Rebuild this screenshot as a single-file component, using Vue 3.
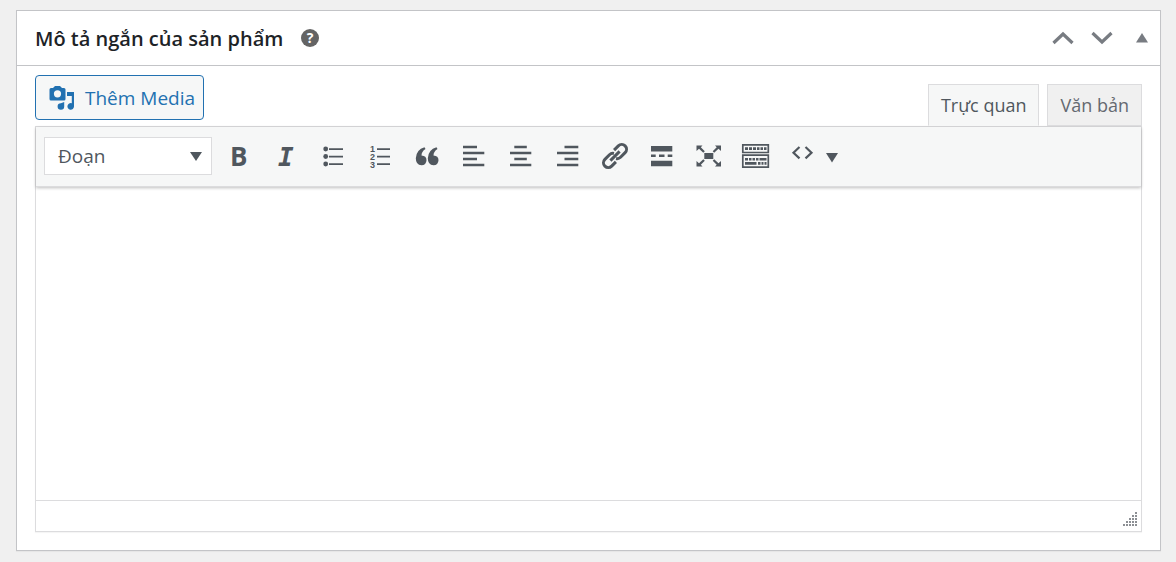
<script setup>
import { ref } from 'vue'

const format = ref('p')
const mode = ref('visual')
const content = ref('')
const open = ref(true)
</script>

<template>
  <section class="postbox">
    <header class="head">
      <h2>Mô tả ngắn của sản phẩm</h2>
      <button type="button" class="plain help" aria-label="Trợ giúp">
        <svg width="18" height="18" viewBox="0 0 18 18">
          <circle cx="9" cy="9" r="9" fill="#646464" />
          <text x="9" y="14" text-anchor="middle" class="mark">?</text>
        </svg>
      </button>
      <div class="handles">
        <button type="button" class="plain" aria-label="Di chuyển lên">
          <svg width="22" height="14" viewBox="0 0 22 14">
            <path d="M1.5 12 11 3l9.500 9" fill="none" stroke="#787c82" stroke-width="3.200" />
          </svg>
        </button>
        <button type="button" class="plain" aria-label="Di chuyển xuống">
          <svg width="22" height="14" viewBox="0 0 22 14">
            <path d="M1.500 2 11 11 20.500 2" fill="none" stroke="#787c82" stroke-width="3.200" />
          </svg>
        </button>
        <button type="button" class="plain toggle" aria-label="Thu gọn" @click="open = !open">
          <svg width="12" height="14" viewBox="0 0 12 14">
            <path d="M6 2 12 11.500H0z" fill="#787c82" />
          </svg>
        </button>
      </div>
    </header>

    <div v-show="open" class="inside">
      <div class="tools">
        <button type="button" class="media">
          <svg width="26" height="26" viewBox="0 0 26 26" fill="#2271b1">
            <path fill-rule="evenodd" d="M2 3h2l2-2h5l2 2h2q1.500 0 1.500 1.500V14q0 1.500-1.500 1.500H2Q.5 15.500.5 14V4.500Q.5 3 2 3zM8.500 5.200a3.600 3.600 0 1 0 0 7.200 3.600 3.600 0 0 0 0-7.200z" />
            <path d="M18 7h7v14.500a3.300 3.300 0 1 1-2.200-3.200V11H18z" />
            <path d="M15.200 17v4.500a3.300 3.300 0 1 1-3.300-3.300z" />
          </svg>
          Thêm Media
        </button>
        <div class="tabs">
          <button type="button" :class="{ active: mode === 'visual' }" @click="mode = 'visual'">Trực quan</button>
          <button type="button" :class="{ active: mode === 'text' }" @click="mode = 'text'">Văn bản</button>
        </div>
      </div>

      <div class="editor">
        <div class="toolbar" role="toolbar">
          <div class="format">
            <select v-model="format" aria-label="Định dạng">
              <option value="p">Đoạn</option>
            </select>
            <svg width="12" height="10" viewBox="0 0 12 10"><path d="M0 1h12L6 10z" /></svg>
          </div>

          <button type="button" class="tool" aria-label="Chữ đậm">
            <svg width="32" height="32"><text x="7" y="26" class="bold">B</text></svg>
          </button>
          <button type="button" class="tool" aria-label="Chữ nghiêng">
            <svg width="32" height="32"><text x="8" y="26" class="italic">I</text></svg>
          </button>
          <button type="button" class="tool" aria-label="Danh sách">
            <svg width="32" height="32">
              <circle cx="8.700" cy="9" r="2.400" /><circle cx="8.700" cy="16.500" r="2.400" /><circle cx="8.700" cy="24" r="2.400" />
              <path d="M12 8.200h14v1.700H12zM12 15.700h14v1.700H12zM12 23.200h14v1.700H12z" />
            </svg>
          </button>
          <button type="button" class="tool" aria-label="Danh sách đánh số">
            <svg width="32" height="32">
              <g class="digits"><text x="6" y="12">1</text><text x="6" y="20">2</text><text x="6" y="28">3</text></g>
              <path d="M13 8.200h13v1.700H13zM13 15.700h13v1.700H13zM13 23.200h13v1.700H13z" />
            </svg>
          </button>
          <button type="button" class="tool" aria-label="Trích dẫn">
            <svg width="32" height="32">
              <path d="M13.500 7.200 14.500 9q-4 2.500-4 6.500 5 .3 5 4.800-.3 5-5 5-5.700-.3-5.700-7Q5.300 9.500 13.500 7.200z" />
              <path d="M25.500 7.200 26.500 9q-4 2.500-4 6.500 5 .3 5 4.800-.3 5-5 5-5.700-.3-5.700-7Q17.300 9.500 25.500 7.200z" />
            </svg>
          </button>
          <button type="button" class="tool" aria-label="Căn trái">
            <svg width="32" height="32"><path d="M5 5.800h14v2.500H5zM5 11.700h21.300v2.500H5zM5 17.800h14v2.500H5zM5 23.800h21.300v2.500H5z" /></svg>
          </button>
          <button type="button" class="tool" aria-label="Căn giữa">
            <svg width="32" height="32"><path d="M9.300 5.800h12.500v2.500H9.300zM5 11.700h21.300v2.500H5zM9.300 17.800h12.500v2.500H9.300zM5 23.800h21.300v2.500H5z" /></svg>
          </button>
          <button type="button" class="tool" aria-label="Căn phải">
            <svg width="32" height="32"><path d="M12.500 5.800H26.300v2.500H12.500zM5 11.700h21.300v2.500H5zM12.500 17.800H26.300v2.500H12.500zM5 23.800h21.300v2.500H5z" /></svg>
          </button>
          <button type="button" class="tool" aria-label="Chèn liên kết">
            <svg width="32" height="32">
              <g transform="rotate(-45 16 16)" fill="none" stroke="#50575e" stroke-width="3">
                <path d="M12.500 20.800H6.500a4.800 4.800 0 0 1 0-9.600H13a4.800 4.800 0 0 1 4 2.300" />
                <path d="M19.500 11.200h6a4.800 4.800 0 0 1 0 9.600H19a4.800 4.800 0 0 1-4-2.300" />
                <path d="M9.500 16h13" />
              </g>
            </svg>
          </button>
          <button type="button" class="tool" aria-label="Thẻ đọc thêm">
            <svg width="32" height="32"><path d="M5 6h21.300v5.500H5zM5 14.500h4.700V17H5zM13 14.500h5.500V17H13zM21.700 14.500h4.600V17h-4.600zM5 20.800h21.300v5.500H5z" /></svg>
          </button>
          <button type="button" class="tool" aria-label="Toàn màn hình">
            <svg width="32" height="32">
              <path d="M11.300 13h9v6h-9zM3.500 5.500h6L7.800 7.200l4 4-1.500 1.500-4.300-4-2.500 2.300zM28 5.500h-6l1.700 1.700-4 4 1.500 1.500 4.300-4L28 11zM3.500 26.500h6l-1.700-1.700 4-4-1.500-1.500-4.300 4L3.500 21zM28 26.500h-6l1.700-1.700-4-4 1.500-1.500 4.300 4L28 21z" />
            </svg>
          </button>
          <button type="button" class="tool" aria-label="Bật tắt thanh công cụ">
            <svg width="32" height="32">
              <path fill="none" stroke="#50575e" stroke-width="1.700" d="M2.800 4.800h25.500v7.700H2.800zM2.800 15.200h25.500v12H2.800z" />
              <path d="M5 7.200h3v2.800H5zM9 7.200h3v2.800H9zM13 7.200h3v2.800h-3zM17 7.200h2.500v2.800H17zM20.500 7.200H23v2.800h-2.500zM24 7.200h2.500v2.800H24zM5 18h3v2.500H5zM9 18h2.500v2.500H9zM12.500 18H15v2.500h-2.500zM16 18h2.500v2.500H16zM19.500 18h7v2.500h-7zM5 22h11.500v2.800H5zM18 22h2.500v2.800H18zM21.500 22h2v2.800h-2zM24.500 22h2v2.800h-2z" />
            </svg>
          </button>
          <button type="button" class="tool code" aria-label="Mã nguồn">
            <svg width="52" height="32">
              <path fill="none" stroke="#50575e" stroke-width="2.200" d="M12.500 7 6.500 12.700l6 5.700M18.500 7l6 5.700-6 5.700" />
              <path d="M39 13h12l-6 9.500z" />
            </svg>
          </button>
        </div>
        <textarea v-model="content" aria-label="Nội dung"></textarea>
        <div class="status">
          <svg width="14" height="14" viewBox="0 0 14 14">
            <path d="M12 0h2v2h-2zM9 3h2v2H9zM12 3h2v2h-2zM6 6h2v2H6zM9 6h2v2H9zM12 6h2v2h-2zM3 9h2v2H3zM6 9h2v2H6zM9 9h2v2H9zM12 9h2v2h-2zM0 12h2v2H0zM3 12h2v2H3zM6 12h2v2H6zM9 12h2v2H9zM12 12h2v2h-2z" />
          </svg>
        </div>
      </div>
    </div>
  </section>
</template>

<style>
body {
  background: #f0f0f0;
}
</style>

<style scoped>
.postbox {
  margin: 10px 15px 11px 16px;
  border: 1px solid #c3c4c7;
  background: #fff;
  box-shadow: 0 1px 1px rgba(0, 0, 0, 0.04);
  font-family: "Segoe UI", "Open Sans", "Noto Sans", sans-serif;
  font-size: 18px;
  color: #50575e;
}
button,
select,
textarea {
  font: inherit;
  color: inherit;
}
svg {
  display: block;
  flex: none;
  overflow: visible;
}
.plain {
  padding: 0;
  border: 0;
  background: none;
}
.head {
  display: flex;
  align-items: center;
  height: 54px;
  padding: 0 12px 0 18px;
  border-bottom: 1px solid #c3c4c7;
}
h2 {
  margin: 0;
  padding-top: 2px;
  font-size: 20px;
  font-weight: 600;
  line-height: 28px;
  color: #1d2327;
}
.help {
  margin-left: 18px;
}
.mark {
  font: bold 14px "Open Sans", sans-serif;
  fill: #fff;
}
.handles {
  display: flex;
  gap: 17px;
  margin-left: auto;
}
.toggle {
  margin-left: 6px;
}
.inside {
  padding: 9px 18px 18px;
}
.tools {
  display: flex;
  justify-content: space-between;
  align-items: flex-start;
}
.media {
  display: flex;
  align-items: center;
  gap: 10px;
  height: 45px;
  padding: 0 8px 0 13px;
  border: 1px solid #2271b1;
  border-radius: 4px;
  background: #f6f7f7;
  font-size: 19px;
  color: #2271b1;
}
.tabs {
  display: flex;
  gap: 8px;
  margin-top: 9px;
}
.tabs button {
  height: 42px;
  padding: 0 12px;
  border: 1px solid #dcdcde;
  background: #f0f0f0;
  color: #646970;
}
.tabs .active {
  border-bottom-color: #f6f7f7;
  background: #f6f7f7;
  color: #50575e;
}
.editor {
  border: 1px solid #dcdcde;
  box-shadow: 0 1px 1px rgba(0, 0, 0, 0.04);
}
.toolbar {
  display: flex;
  align-items: center;
  flex-wrap: wrap;
  padding: 10px 8px 11px;
  border-bottom: 1px solid #dcdcde;
  background: #f6f7f7;
  box-shadow: 0 1px 3px rgba(0, 0, 0, 0.25);
}
.format {
  display: grid;
  align-items: center;
  width: 168px;
  margin-right: 4px;
}
.format > * {
  grid-area: 1 / 1;
}
.format svg {
  justify-self: end;
  margin-right: 10px;
  pointer-events: none;
}
select {
  width: 100%;
  height: 38px;
  padding: 0 30px 0 13px;
  border: 1px solid #dcdcde;
  border-radius: 0;
  background: #fff;
  font-size: 19px;
  appearance: none;
}
.tool {
  width: 47px;
  padding: 0 8px 0 7px;
  border: 0;
  background: none;
}
.code {
  width: 67px;
}
.toolbar svg {
  fill: #50575e;
}
.bold {
  font: bold 26px "Open Sans", sans-serif;
}
.italic {
  font: italic bold 26px "DejaVu Sans Mono", monospace;
}
.digits {
  font: bold 9px "Liberation Sans", sans-serif;
}
textarea {
  display: block;
  box-sizing: border-box;
  width: 100%;
  height: 313px;
  padding: 12px;
  border: 0;
  outline: 0;
  background: transparent;
  resize: none;
}
.status {
  display: flex;
  justify-content: flex-end;
  align-items: flex-end;
  height: 30px;
  padding-right: 4px;
  border-top: 1px solid #dcdcde;
}
.status svg {
  margin-bottom: 5px;
  fill: #8c8f94;
}
</style>
